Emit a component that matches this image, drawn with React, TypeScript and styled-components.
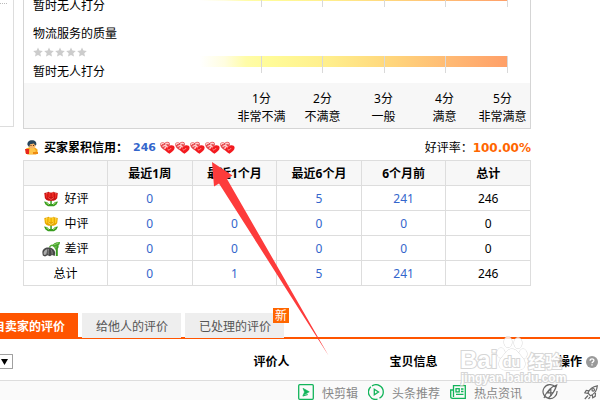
import React from "react";
import styled, { createGlobalStyle } from "styled-components";

const GlobalStyle = createGlobalStyle`
  *, *::before, *::after { box-sizing: border-box; }
  body {
    margin: 0;
    background: #fff;
    color: #000;
    font: 12px/18px "Noto Sans", "Noto Sans CJK SC", sans-serif;
  }
  a { color: inherit; text-decoration: none; }
  svg { display: block; flex: none; }
`;

const Page = styled.div`
  position: relative;
  display: flex;
  flex-direction: column;
  height: 100vh;
  overflow: hidden;
`;

const Columns = styled.div`
  display: flex;
  align-items: flex-start;
  gap: 9px;
  padding-right: 69px;
`;

const SidePanel = styled.aside`
  flex: none;
  width: 14px;
  height: 127px;
  border: solid #ddd;
  border-width: 0 1px 1px 0;
`;

const SideDivider = styled.div`
  width: 7px;
  height: 4px;
  border-bottom: 1px dotted #bbb;
`;

const Main = styled.main`
  flex: 1;
  min-width: 0;
`;

const ScorePanel = styled.section`
  border: 1px solid #d5d5d5;
  border-top: 0;
`;

const ScoreRow = styled.div<{ $clipped?: boolean }>`
  display: grid;
  grid-template-columns: 176px 1fr;
  grid-template-rows: 100%;
  align-items: end;
  height: ${(p) => (p.$clipped ? 17 : 66)}px;
  padding-right: 22px;
`;

const ScoreLabel = styled.div`
  padding: 0 0 2px 9px;
`;

const Stars = styled.div`
  display: flex;
  align-items: center;
  gap: 1px;
  height: 20px;
  padding-bottom: 2px;
`;

const Scale = styled.div`
  display: grid;
  grid-template-columns: repeat(5, 1fr);
  height: 17px;
  margin-bottom: 10px;
  background: linear-gradient(90deg, #fff 0%, #fffde0 8%, #fffca8 15%, #fffb98 23%, #ffee8c 42%, #ffd67c 62%, #ffb873 82%, #ff9f68 100%)
    top / 100% 11px no-repeat;
`;

const Tick = styled.i`
  border-right: 1px solid #d9d9d9;
`;

const ScoreLegend = styled.ol`
  display: grid;
  grid-template-columns: repeat(4, 61fr) 55fr;
  margin: 0;
  padding: 7px 0 2px 207px;
  list-style: none;
  text-align: center;
  background: #f7f7f7;
`;

const LegendItem = styled.li`
  display: flex;
  flex-direction: column;
  white-space: nowrap;
`;

const CreditBar = styled.div`
  display: flex;
  align-items: center;
  height: 31px;
  padding: 6px 0 0 2px;
`;

const CreditLabel = styled.b`
  margin: 0 5px;
`;

const Figure = styled.b<{ $tone: string; $size: number }>`
  color: ${(p) => p.$tone};
  font: bold ${(p) => p.$size}px/18px "DejaVu Sans", sans-serif;
`;

const Hearts = styled.span`
  display: flex;
  flex: 1;
  margin-left: 4px;
`;

const Ratings = styled.table`
  width: 100%;
  table-layout: fixed;
  border-collapse: collapse;
  text-align: center;
  th, td {
    height: 25px;
    padding: 2px 0 0;
    border: 1px solid #ddd;
    line-height: 18px;
  }
  thead { background: #f7f7f7; }
  thead td { width: 84px; }
  tbody th { font-weight: normal; }
`;

const RowName = styled.span`
  display: flex;
  align-items: center;
  justify-content: center;
  gap: 4px;
`;

const CountLink = styled.a`
  color: #36c;
`;

const Tabs = styled.nav`
  display: flex;
  align-items: flex-start;
  height: 31px;
  margin-top: 22px;
  padding-top: 5px;
  border-bottom: 2px solid #ff5500;
`;

const Tab = styled.button<{ $active?: boolean }>`
  position: relative;
  flex: none;
  height: 25px;
  margin: 0 4px 0 ${(p) => (p.$active ? -33 : 0)}px;
  padding: 2px 13px 0 14px;
  border: 0;
  background: ${(p) => (p.$active ? "#ff5500" : "#eee")};
  color: ${(p) => (p.$active ? "#fff" : "#555")};
  font: inherit;
  font-weight: ${(p) => (p.$active ? "bold" : "normal")};
  white-space: nowrap;
`;

const NewBadge = styled.sup`
  position: absolute;
  top: -5px;
  right: -5px;
  width: 16px;
  height: 15px;
  background: #f60;
  color: #fff;
  font-size: 12px;
  line-height: 16px;
`;

const ListHead = styled.div`
  display: grid;
  grid-template-columns: 200fr 143fr 141fr 116fr;
  align-items: center;
  flex: none;
  height: 42px;
  padding-top: 4px;
  border-bottom: 1px solid #ddd;
  font-weight: bold;
  text-align: center;
`;

const FilterWrap = styled.label`
  display: flex;
  align-items: center;
  width: 13px;
  height: 15px;
  border: solid #a0a0a0;
  border-width: 1px 1px 1px 0;
  border-radius: 0 1px 1px 0;
`;

const Filter = styled.select`
  width: 1px;
  height: 13px;
  padding: 0;
  border: 0;
  background: none;
  appearance: none;
`;

const Actions = styled.span`
  display: flex;
  align-items: center;
  justify-content: flex-end;
  gap: 4px;
  padding-right: 2px;
`;

const StatusBar = styled.footer`
  display: flex;
  flex: 1 0 auto;
  align-items: flex-start;
  justify-content: flex-end;
  gap: 10px;
  height: 18px;
  padding: 3px 2px 0 0;
  overflow: hidden;
  background: #fafafa;
  color: #888;
`;

const StatusLink = styled.a`
  display: flex;
  align-items: flex-start;
  gap: 8px;
  line-height: 20px;
  white-space: nowrap;
`;

const StatusTools = styled.span`
  display: flex;
  gap: 26px;
  margin-left: 10px;
`;

const ArrowMark = styled.svg`
  position: absolute;
  left: 212px;
  top: 162px;
  pointer-events: none;
`;

const Watermark = styled.svg`
  position: absolute;
  right: 32px;
  top: 334px;
  opacity: 0.8;
  pointer-events: none;
`;

const Star = () => (
  <svg width="10" height="10" viewBox="0 0 10 10" fill="#ccc" aria-hidden="true">
    <path d="M5 .4 6.4 3.5 9.8 3.9 7.3 6.2 8 9.6 5 7.9 2 9.6 2.7 6.2.2 3.9 3.6 3.5Z" />
  </svg>
);

const Buyer = () => (
  <svg width="14" height="15" viewBox="0 0 14 15" aria-hidden="true">
    <path d="M1 8.500 4 7.500h6l2.500 2v4L11 14.600H2.500L.5 13Z" fill="#f6a81c" />
    <path d="M5 8h4l2 3-3 3H4Z" fill="#ffc64b" />
    <ellipse cx="7" cy="5" rx="3.6" ry="3.6" fill="#f5b56a" />
    <path d="M2.500 5C2 2 4 .3 7 .3S12 2 11.200 5L10 5.500 9 3.600 5 4.200 4.200 7Z" fill="#27455c" />
    <path d="M0 9h4v5H1Z" fill="#e8261c" />
    <path d="M8 12h5v2H8Z" fill="#ee8a12" />
    <path d="M5.500 5.500h1M8 5.500h1" stroke="#5c2f12" />
  </svg>
);

const Heart = () => (
  <svg width="15" height="13" viewBox="0 0 15 13" aria-hidden="true">
    <path d="M5.500 9.800C2 8 0 5.800.2 3.300.4 1.200 2.800.4 4.800 2 6.300.2 9.600.5 9.900 3c.2 2.600-1.700 4.700-4.400 6.800Z" fill="#e5484c" />
    <path d="M9.400 12.700C6 10.800 4.300 8.800 4.600 6.600 5 4.600 7.200 4.100 8.900 5.500c1.600-2 5.500-1.500 5.700 1.100.2 2.300-2.200 4.400-5.200 6.100Z" fill="#f31a1f" />
    <path d="M1.300 3.900C1.500 2.300 2.800 2.100 3.700 2.800M5.500 3.300C6.500 1.800 8.300 2 8.700 3.300M2.500 5.500l2.900-1.300 1.500 1M4.900 8C4.800 5.900 6.500 5 8.200 6" fill="none" stroke="#ffd0d0" strokeWidth="1.300" />
    <path d="m7.500 8 1.500 1.300L11.200 7" fill="none" stroke="#ff8280" />
  </svg>
);

const Flower = ({ dark, mid, light }: { dark: string; mid: string; light: string }) => (
  <svg width="18" height="16" viewBox="0 0 18 16" aria-hidden="true">
    <path d="M8.300 9h1.500v5H8.300Z" fill="#3a9a22" />
    <path d="M2 10.500 5 11l2 2h4l2-2 3-.5-1.500 3L12 15.300H6L3.500 13.500Z" fill="#379c1e" />
    <path d="m4 11.500 3 2.200M14 11.500l-3 2.200" stroke="#9ad66c" />
    <path d="M2.300 2 5 1.500 6.500.7 9 1.700 11.500.7 13 1.500l2.800.5-.6 5.200L13.500 9l-2 .8h-5l-2-.8L2.900 7.200Z" fill={dark} />
    <path d="M3.300 3h2v4h-1ZM6.500 2h2v4h-2ZM9.700 2h2v4h-2ZM13 3h1.700l-.6 4H13Z" fill={mid} />
    <path d="M6 6.500 9 8.600l3-2.100M4 2.600h1.500M7 1.600h1M10 1.600h1.500M13 2.600h1.500" fill="none" stroke={light} strokeWidth=".6" />
  </svg>
);

const Wilted = () => (
  <svg width="18" height="16" viewBox="0 0 18 16" aria-hidden="true">
    <path d="M14.800 15V7.500L16 5" fill="none" stroke="#3b9b24" strokeWidth="2" />
    <path d="M14 8.500C13 4.500 9 2.500 7.500 6.500" fill="none" stroke="#55ad36" strokeWidth="1.500" />
    <path d="M10.500 4.500C12 1.500 15 1 18 1c0 2.500-1.500 4.500-4 5Z" fill="#46a52b" />
    <path d="M12 3.800 16.500 2" stroke="#a0d87c" strokeWidth=".8" />
    <path d="M.4 12C0 8.500 3 6.500 6 6.500c4 0 7 2 7.200 5.500l-.5 3-2.700-1-2 1.200-2.500-1L3 15.400.8 14.500Z" fill="#484848" />
    <path d="M1.500 12C2 9.500 3.500 8.500 5.500 8L4.300 13.500 2 14Z" fill="#aaa" />
    <path d="M6.500 8C6 10 6 12 6.300 13.500M9 8.500c1 1.500 1.200 3 1.100 5" fill="none" stroke="#8b8b8b" />
  </svg>
);

const Help = () => (
  <svg width="12" height="12" viewBox="0 0 12 12" role="img" aria-label="帮助">
    <circle cx="6" cy="6" r="6" fill="#999" />
    <path d="M4.100 4.700C4 2.300 8 2.300 7.900 4.600 7.900 6 6 5.800 6 7.300M6 8.300v1.300" fill="none" stroke="#fff" strokeWidth="1.300" />
  </svg>
);

const ClipIcon = () => (
  <svg width="16" height="16" viewBox="0 0 16 16" fill="none" stroke="#12b45a" strokeWidth="1.300" aria-hidden="true">
    <rect x=".7" y=".7" width="14.600" height="14.600" rx="1" />
    <path d="m5 4.300 6.300 3.500L5 11.500 6.500 8Z" fill="#12b45a" strokeWidth=".6" />
    <path d="m4.700 12 5-1.500" />
  </svg>
);

const PlayIcon = () => (
  <svg width="16" height="16" viewBox="0 0 16 16" fill="none" stroke="#12b45a" strokeWidth="1.300" aria-hidden="true">
    <path d="M4 1.900A7.300 7.300 0 0 1 15.300 8c0 2.500-1.500 5-3.800 6.200M2.800 2.800A7.300 7.300 0 0 0 9.500 15.200" />
    <path d="M6.300 5.300 10.500 8l-4.200 2.700Z" />
  </svg>
);

const NewsIcon = () => (
  <svg width="16" height="16" viewBox="0 0 16 16" fill="none" stroke="#12b45a" strokeWidth="1.300" aria-hidden="true">
    <path d="M3.500 13V1.700h11.800v12.600H2.500C1 14.300.7 13.500.7 12.500V6h2.800" />
    <rect x="6" y="4.700" width="3.200" height="3.200" />
    <path d="M11 5h2.500M11 7.500h2.500M6 10.300h7.500" />
  </svg>
);

const BoostIcon = () => (
  <svg width="16" height="16" viewBox="0 0 16 16" fill="none" stroke="#666" strokeWidth="1.200" aria-hidden="true">
    <path d="M13.300 3A7 7 0 1 0 15 7M2 14C4 9 8 3 14.700 1 14 3.500 12 9 6 14.500" />
    <path d="M8.800 4.500 5.500 8.800h5.700M8.800 4.500v7.500" />
  </svg>
);

const RocketIcon = () => (
  <svg width="14" height="16" viewBox="0 0 14 16" fill="none" stroke="#666" strokeWidth="1.200" aria-hidden="true">
    <path d="M4 9C5.500 5 8.500 2.500 13.300 1.800 13 6.500 10.500 10 6.500 11.800ZM5 6.800 2.300 6.300.8 8.800 4 9.500M8.300 10.800l.4 3 2.500-1.500.3-3.300M4 11.500.8 15M6 13l-1.500 2" />
    <circle cx="9.200" cy="5.800" r="1.300" />
  </svg>
);

const stars = [1, 2, 3, 4, 5];

const legend = [
  ["1分", "非常不满"],
  ["2分", "不满意"],
  ["3分", "一般"],
  ["4分", "满意"],
  ["5分", "非常满意"],
];

const periods = ["最近1周", "最近1个月", "最近6个月", "6个月前"];

const ratings = [
  { name: "好评", icon: <Flower dark="#c91212" mid="#ee2a22" light="#ff8a78" />, counts: [0, "", 5, 241], total: 246 },
  { name: "中评", icon: <Flower dark="#e8a800" mid="#ffcf22" light="#fff09a" />, counts: [0, 0, 0, 0], total: 0 },
  { name: "差评", icon: <Wilted />, counts: [0, 0, 0, 0], total: 0 },
  { name: "总计", icon: null, counts: [0, 1, 5, 241], total: 246 },
];

const ScoreScale = () => (
  <Scale>
    {stars.map((n) => (
      <Tick key={n} />
    ))}
  </Scale>
);

export default function App() {
  return (
    <>
      <GlobalStyle />
      <Page>
        <Columns>
          <SidePanel>
            <SideDivider />
          </SidePanel>
          <Main>
            <ScorePanel>
              <ScoreRow $clipped>
                <ScoreLabel>暂时无人打分</ScoreLabel>
                <ScoreScale />
              </ScoreRow>
              <ScoreRow>
                <ScoreLabel>
                  <div>物流服务的质量</div>
                  <Stars>
                    {stars.map((n) => (
                      <Star key={n} />
                    ))}
                  </Stars>
                  <div>暂时无人打分</div>
                </ScoreLabel>
                <ScoreScale />
              </ScoreRow>
              <ScoreLegend>
                {legend.map(([score, text]) => (
                  <LegendItem key={score}>
                    <span>{score}</span>
                    <span>{text}</span>
                  </LegendItem>
                ))}
              </ScoreLegend>
            </ScorePanel>

            <CreditBar>
              <Buyer />
              <CreditLabel>买家累积信用：</CreditLabel>
              <Figure $tone="#3366cc" $size={11}>246</Figure>
              <Hearts>
                {stars.map((n) => (
                  <Heart key={n} />
                ))}
              </Hearts>
              <span>好评率：</span>
              <Figure $tone="#ff6600" $size={12}>100.00%</Figure>
            </CreditBar>

            <Ratings>
              <thead>
                <tr>
                  <td />
                  {periods.map((p) => (
                    <th key={p} scope="col">{p}</th>
                  ))}
                  <th scope="col">总计</th>
                </tr>
              </thead>
              <tbody>
                {ratings.map((row) => (
                  <tr key={row.name}>
                    <th scope="row">
                      <RowName>
                        {row.icon}
                        {row.name}
                      </RowName>
                    </th>
                    {row.counts.map((count, i) => (
                      <td key={periods[i]}>
                        <CountLink href="#ratings">{count}</CountLink>
                      </td>
                    ))}
                    <td>{row.total}</td>
                  </tr>
                ))}
              </tbody>
            </Ratings>
          </Main>
        </Columns>

        <Tabs>
          <Tab $active>来自卖家的评价</Tab>
          <Tab>给他人的评价</Tab>
          <Tab>
            已处理的评价
            <NewBadge>新</NewBadge>
          </Tab>
        </Tabs>

        <ListHead id="ratings">
          <FilterWrap>
            <Filter aria-label="评价" />
            <svg width="7" height="6" viewBox="0 0 7 6" aria-hidden="true">
              <path d="M0 0h7L3.500 6Z" />
            </svg>
          </FilterWrap>
          <span>评价人</span>
          <span>宝贝信息</span>
          <Actions>
            操作
            <Help />
          </Actions>
        </ListHead>

        <StatusBar>
          <StatusLink href="#clip">
            <ClipIcon />
            快剪辑
          </StatusLink>
          <StatusLink href="#headlines">
            <PlayIcon />
            头条推荐
          </StatusLink>
          <StatusLink href="#news">
            <NewsIcon />
            热点资讯
          </StatusLink>
          <StatusTools>
            <BoostIcon />
            <RocketIcon />
          </StatusTools>
        </StatusBar>

        <ArrowMark width="118" height="195" viewBox="0 0 118 195" aria-hidden="true">
          <path d="M0 0 20.500 13.500 15 17 116.500 193.500 7 21.500 2 24.500Z" fill="#fd3b3b" />
        </ArrowMark>

        <Watermark width="108" height="52" viewBox="0 0 108 52" fill="#fff" stroke="#ccc" strokeWidth="1">
          <g fontFamily="Liberation Sans, sans-serif" fontWeight="bold" paintOrder="stroke">
            <text x="0" y="34" fontSize="24" strokeWidth="2">Bai</text>
            <ellipse cx="41" cy="19" rx="4" ry="5" />
            <ellipse cx="48" cy="8" rx="4" ry="5.500" />
            <ellipse cx="58" cy="9" rx="4" ry="5.500" />
            <ellipse cx="63" cy="20" rx="4" ry="5" />
            <path d="M52 15c5 0 7 5 10 8 4 4 5 12-3 13-4 .3-10 .3-14 0-8-1-7-9-3-13 3-3 5-8 10-8Z" />
            <text x="43" y="33" fontSize="14" strokeWidth="2">du</text>
            <text x="68" y="34" fontSize="17" strokeWidth="2" fontFamily="Noto Sans CJK SC, sans-serif">经验</text>
            <text x="1" y="48" fontSize="12" strokeWidth="2">jingyan.baidu.com</text>
          </g>
        </Watermark>
      </Page>
    </>
  );
}
